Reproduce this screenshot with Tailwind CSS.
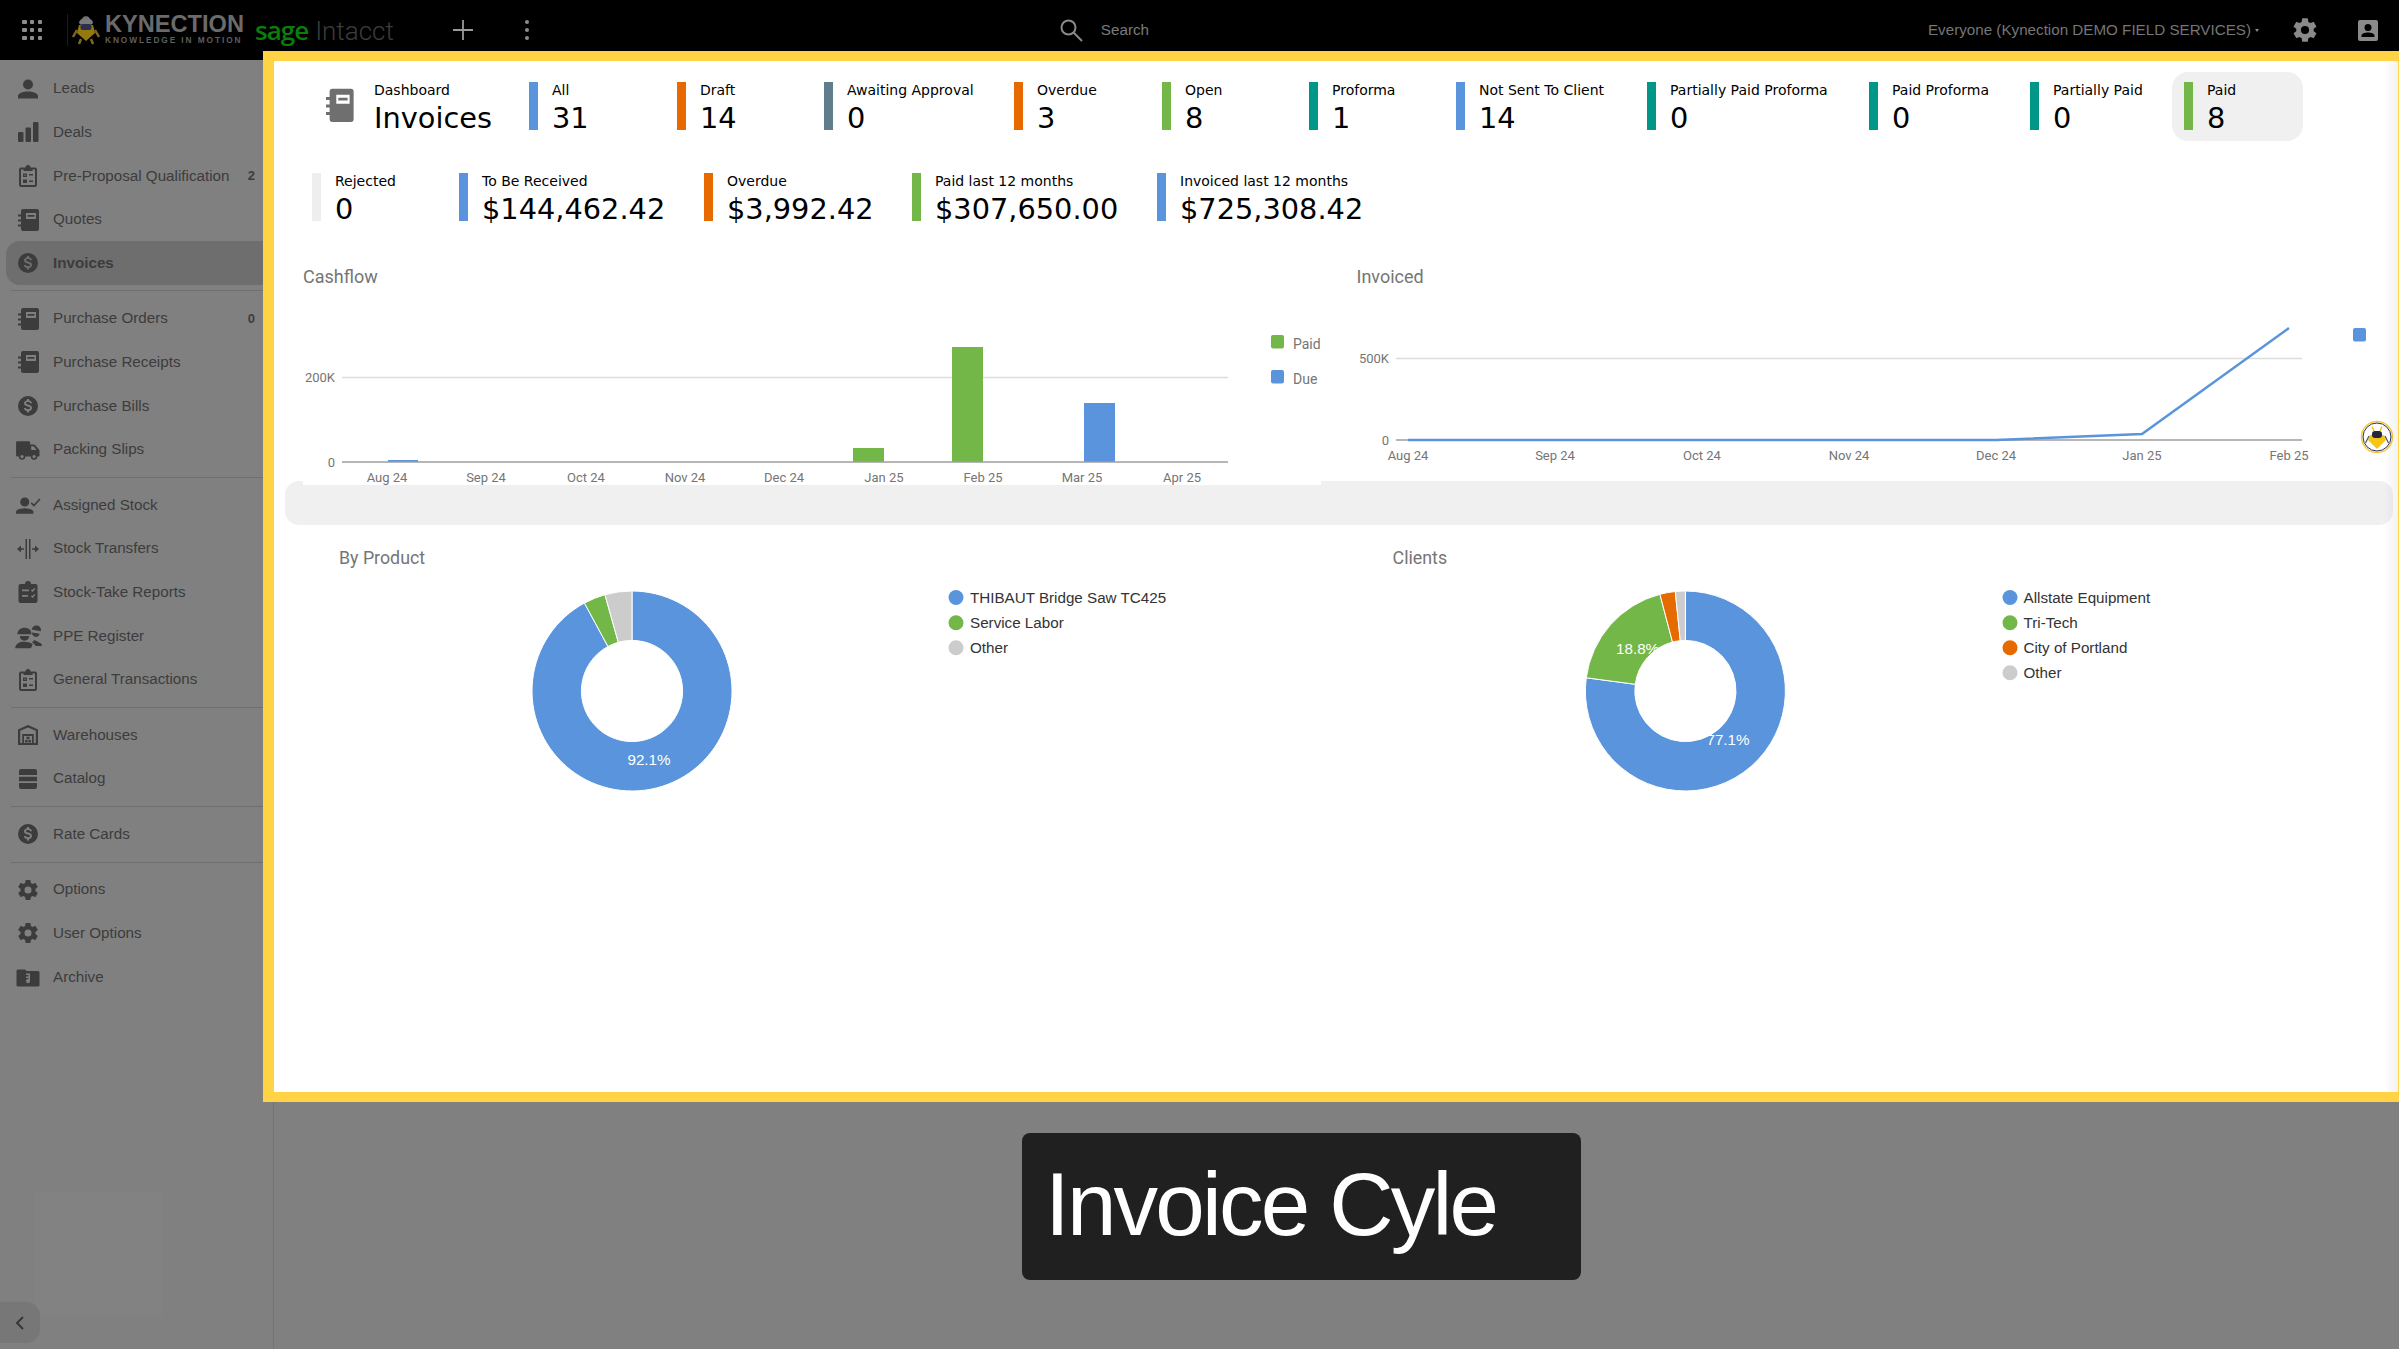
<!DOCTYPE html>
<html lang="en">

<head>
    <meta charset="UTF-8">
    <meta name="viewport" content="width=device-width, initial-scale=1.0">
    <script src="https://cdn.jsdelivr.net/npm/@tailwindcss/browser@4"></script>
    <title>Invoices</title>
</head>

<body class="m-0 bg-[#808080]">
    <svg class="hidden" xmlns="http://www.w3.org/2000/svg">
        <defs>
            <symbol id="i-person" viewBox="0 0 24 24"><path d="M12 2.500a5 5 0 1 1 0 10 5 5 0 0 1 0-10zM12 14.500c-5.300 0-10 2-10 4.500v2.500h20V19c0-2.500-4.700-4.500-10-4.500z"/></symbol>
            <symbol id="i-bars" viewBox="0 0 24 24"><rect x="2" y="12" width="5.500" height="10" rx="1"/><rect x="9.500" y="7.500" width="5.500" height="14.500" rx="1"/><rect x="17" y="2" width="5.500" height="20" rx="1"/></symbol>
            <symbol id="i-note" viewBox="0 0 24 24"><path fill-rule="evenodd" d="M7 1h14a2 2 0 0 1 2 2v18a2 2 0 0 1-2 2H7a2 2 0 0 1-2-2v-2.500H2v-2h3v-3H2v-2h3v-3H2v-2h3V3a2 2 0 0 1 2-2zM10 5v6h10V5H10zM11.500 7h7v1.800h-7V7z"/></symbol>
            <symbol id="i-clip" viewBox="0 0 24 24"><path fill-rule="evenodd" d="M5 3.500h4.500a2.500 2.500 0 0 1 5 0H19a2 2 0 0 1 2 2V21a2 2 0 0 1-2 2H5a2 2 0 0 1-2-2V5.500a2 2 0 0 1 2-2zM5 5.500V21h14V5.500h-2.500V7h-9V5.500H5zM7 9.500h4v3.500H7V9.500zM8.300 10.700v1.100h1.400v-1.100H8.300zM13 10h4v1.500h-4V10zM7 15.500h4V19H7v-3.500zM13 16.500h4V18h-4v-1.500z"/></symbol>
            <symbol id="i-dollar" viewBox="0 0 24 24"><path fill-rule="evenodd" d="M12 2a10 10 0 1 0 0 20 10 10 0 0 0 0-20zM13 17v1.500h-2V17c-1.700-.2-3-1.300-3-3h2c0 .8.900 1.200 2 1.200s2-.4 2-1.200-.9-1-2.200-1.400C10.100 12.200 8 11.600 8 9.300 8 7.900 9.200 6.700 11 6.300V5h2v1.300c1.700.4 3 1.600 3 3h-2c0-.8-.9-1.200-2-1.200s-2 .4-2 1.200c0 .7.900.9 2.200 1.300 1.700.5 3.800 1.100 3.800 3.400 0 1.600-1.300 2.700-3 3z"/></symbol>
            <symbol id="i-truck" viewBox="0 0 24 24"><path fill-rule="evenodd" d="M2 4h11a1 1 0 0 1 1 1v2h3.500c.5 0 .9.200 1.200.5l3.600 4.200c.2.300.300.600.300.900V17c0 .600-.4 1-1 1h-1a3 3 0 0 1-6 0H9.500a3 3 0 0 1-6 0H2a1 1 0 0 1-1-1V5a1 1 0 0 1 1-1zM6.500 16.500a1.500 1.500 0 1 0 0 3 1.500 1.500 0 0 0 0-3zM17.600 16.500a1.500 1.500 0 1 0 0 3 1.500 1.500 0 0 0 0-3zM15 8.500V12h5l-2.900-3.500H15z"/></symbol>
            <symbol id="i-pcheck" viewBox="0 0 24 24"><path d="M9 5a4.200 4.200 0 1 1 0 8.400A4.200 4.200 0 0 1 9 5zM9 15c-4.200 0-8 1.500-8 3.300V20h16v-1.700C17 16.500 13.200 15 9 15z"/><path d="M15 10l2.500 2.500L23 6.500" fill="none" stroke="currentColor" stroke-width="1.500"/></symbol>
            <symbol id="i-transfer" viewBox="0 0 24 24"><path d="M9.500 2H11v20H9.500zM13 2h1.500v20H13zM1 12l4-3.500v2.700h3v1.600H5v2.700zM23 12l-4-3.500v2.700h-3v1.600h3v2.700z"/></symbol>
            <symbol id="i-clipcheck" viewBox="0 0 24 24"><path fill-rule="evenodd" d="M4.500 4H9a3 3 0 0 1 6 0h4.500A2 2 0 0 1 21.500 6v15a2 2 0 0 1-2 2h-15a2 2 0 0 1-2-2V6a2 2 0 0 1 2-2zM6 9.500v1.800h7V9.500H6zM6 15v1.800h6V15H6zM15 10.500l1.500 1.500 2.800-3-1-.9-1.800 2-.6-.7-.9 1.100zM15 16.500l1.500 1.500 2.800-3-1-.9-1.800 2-.6-.7-.9 1.100z"/></symbol>
            <symbol id="i-ppe" viewBox="0 0 24 24"><path d="M3 10.500C3 7 5.500 5 9 5s6 2 6 5.500H3zM5 12h8c0 2.500-1.800 4-4 4s-4-1.500-4-4zM8.500 17c-3.800 0-7 1.500-7.500 5.500h13.500L16 19c-2-1.400-4.800-2-7.500-2z"/><path d="M15 6.500c.5-2.500 2.500-4 5-3.500 2.200.4 3.500 2.500 3 5l-8-1.500zM15.500 9l6.500 1c-.5 2-2.200 3-3.800 2.700-1.700-.3-3-2-2.700-3.700zM17.500 15.500l5 2.500c1 .5 1.500 1.500 1.500 2.500h-5.500l-1-1.500-2-1.500 2-2z"/></symbol>
            <symbol id="i-house" viewBox="0 0 24 24"><path fill-rule="evenodd" d="M12 2l10 4.500V22H2V6.500L12 2zM4.200 7.800V20h2V11h11.600v9h2V7.800L12 4.400 4.200 7.800zM8 13v7h8v-7H8zM10.500 13.800h3v2.400h-3v-2.400zM9 17h2.600v2.500H9V17zM12.400 17H15v2.500h-2.600V17z"/></symbol>
            <symbol id="i-stack" viewBox="0 0 24 24"><path d="M5 2h14a2 2 0 0 1 2 2v4H3V4a2 2 0 0 1 2-2zM3 9.800h18v4.400H3zM3 16h18v4a2 2 0 0 1-2 2H5a2 2 0 0 1-2-2v-4z"/></symbol>
            <symbol id="i-gear" viewBox="0 0 24 24"><path d="M12 15.500A3.500 3.500 0 0 1 8.500 12 3.500 3.500 0 0 1 12 8.500a3.500 3.500 0 0 1 3.500 3.500 3.500 3.500 0 0 1-3.500 3.500m7.430-2.530c.04-.32.07-.64.07-.97s-.03-.66-.07-1l2.110-1.630c.19-.15.24-.42.12-.64l-2-3.460c-.12-.22-.39-.31-.61-.22l-2.490 1c-.52-.39-1.060-.73-1.690-.98l-.37-2.650A.506.506 0 0 0 14 2h-4c-.25 0-.46.18-.5.42l-.37 2.650c-.63.25-1.170.59-1.690.98l-2.490-1c-.22-.09-.49 0-.61.22l-2 3.460c-.13.22-.07.49.12.64L4.570 11c-.04.34-.07.67-.07 1s.03.65.07.97l-2.110 1.660c-.19.15-.25.42-.12.64l2 3.460c.12.22.39.3.61.22l2.490-1.010c.52.4 1.060.74 1.690.99l.37 2.650c.04.24.25.42.5.42h4c.25 0 .46-.18.5-.42l.37-2.650c.63-.26 1.170-.59 1.690-.99l2.490 1.010c.22.08.49 0 .61-.22l2-3.460c.12-.22.07-.49-.12-.64l-2.110-1.660z"/></symbol>
            <symbol id="i-archive" viewBox="0 0 24 24"><path fill-rule="evenodd" d="M2 4.500h7l1.500 1.500H22a1.500 1.500 0 0 1 1.500 1.500V20a1.500 1.500 0 0 1-1.500 1.500H2A1.500 1.500 0 0 1 .500 20V6A1.500 1.500 0 0 1 2 4.500zM10 8.500V10h2.500v1.500H10v1.400h2.500v1.300a2 2 0 1 0 1.500 1.900V8.500h-4z"/></symbol>
        </defs>
    </svg>

    <div class="w-[2399px] h-[1349px] overflow-hidden flex flex-col font-['Liberation_Sans',sans-serif]">
        <!--Top bar-->
        <header class="h-[60px] shrink-0 bg-black flex items-center text-[#7a7a7a]">
            <div class="ml-[22px] grid grid-cols-3 gap-[3.500px] w-[20px]">
                <span class="size-[4.500px] bg-[#8c8c8c] rounded-[1px]"></span><span class="size-[4.500px] bg-[#8c8c8c] rounded-[1px]"></span><span class="size-[4.500px] bg-[#8c8c8c] rounded-[1px]"></span>
                <span class="size-[4.500px] bg-[#8c8c8c] rounded-[1px]"></span><span class="size-[4.500px] bg-[#8c8c8c] rounded-[1px]"></span><span class="size-[4.500px] bg-[#8c8c8c] rounded-[1px]"></span>
                <span class="size-[4.500px] bg-[#8c8c8c] rounded-[1px]"></span><span class="size-[4.500px] bg-[#8c8c8c] rounded-[1px]"></span><span class="size-[4.500px] bg-[#8c8c8c] rounded-[1px]"></span>
            </div>
            <div class="ml-[25px] w-px h-[32px] bg-[#1c1c1c]"></div>
            <svg class="ml-[4px]" width="28" height="30" viewBox="0 0 28 30">
                <path d="M7 8a7 5 0 0 1 14 0l-2 2H9z" fill="#7a7a7a"/>
                <circle cx="14" cy="5" r="3" fill="none" stroke="#7a7a7a" stroke-width="1.500"/>
                <path d="M7 10h14l2 8-9 8-9-8z" fill="#94790f"/>
                <rect x="8.500" y="9" width="11" height="6" rx="2" fill="#2b2f4a"/>
                <path d="M5 15L1 22M23 15l4 7M9 24l-2 5M19 24l2 5" stroke="#7a6a20" stroke-width="2.500" fill="none"/>
            </svg>
            <div class="ml-[5px] w-[139px] flex flex-col -mt-[2px]">
                <span class="text-[23.600px] leading-[20px] font-bold text-[#6b6b6b] whitespace-nowrap">KYNECTION</span>
                <span class="text-[8.300px] leading-[9px] mt-[2px] font-bold tracking-[1.920px] text-[#5f5f5f] whitespace-nowrap">KNOWLEDGE IN MOTION</span>
            </div>
            <span class="ml-[11px] mt-[1px] text-[26px] tracking-[-1px] font-['Open_Sans',sans-serif] font-semibold text-[#0b7d0b]">sage</span>
            <span class="ml-[7px] mt-[3px] text-[26px] font-['Roboto',sans-serif] font-light text-[#3c3c3c]">Intacct</span>
            <svg class="ml-[58px]" width="22" height="22" viewBox="0 0 22 22"><path d="M11 1v20M1 11h20" stroke="#9a9a9a" stroke-width="1.800"/></svg>
            <div class="ml-[51px] flex flex-col gap-[3.500px] w-[5px]">
                <span class="size-[4.500px] rounded-full bg-[#8c8c8c]"></span>
                <span class="size-[4.500px] rounded-full bg-[#8c8c8c]"></span>
                <span class="size-[4.500px] rounded-full bg-[#8c8c8c]"></span>
            </div>
            <svg class="ml-[529px]" width="24" height="24" viewBox="0 0 24 24" fill="none" stroke="#8a8a8a" stroke-width="2"><circle cx="9.500" cy="9.500" r="7"/><path d="M14.500 14.500L23 23"/></svg>
            <span class="ml-[18px] text-[15.200px] text-[#7a7a7a]">Search</span>
            <span class="ml-[779px] text-[15.200px] whitespace-nowrap text-[#757575]">Everyone (Kynection DEMO FIELD SERVICES)</span>
            <span class="ml-[4px] w-0 h-0 border-x-[2.500px] border-x-transparent border-t-[3px] border-t-[#8a8a8a]"></span>
            <svg class="ml-[32px] fill-[#8a8a8a]" width="28" height="28"><use href="#i-gear"/></svg>
            <svg class="ml-[39px]" width="20" height="21" viewBox="0 0 20 21"><path fill-rule="evenodd" fill="#8a8a8a" d="M2 0h16a2 2 0 0 1 2 2v17a2 2 0 0 1-2 2H2a2 2 0 0 1-2-2V2a2 2 0 0 1 2-2zM10 4a3.500 3.500 0 1 0 0 7 3.500 3.500 0 0 0 0-7zM3.500 17h13v-1.500c0-1.700-3.200-3-6.500-3s-6.500 1.300-6.500 3V17z"/></svg>
        </header>

        <div class="flex flex-1 min-h-0">
            <!--Sidebar-->
            <aside class="relative w-[274px] shrink-0 border-r border-[#747474] pt-[7px] text-[15.200px] text-[#3c3c3c]">
                <a class="ml-[6px] w-[258px] h-[43.600px] pl-[10px] flex items-center"><svg class="size-[24px] fill-[#3c3c3c]"><use href="#i-person"/></svg><span class="ml-[13px]">Leads</span></a>
                <a class="ml-[6px] w-[258px] h-[43.600px] pl-[10px] flex items-center"><svg class="size-[24px] fill-[#3c3c3c]"><use href="#i-bars"/></svg><span class="ml-[13px]">Deals</span></a>
                <a class="ml-[6px] w-[258px] h-[43.600px] pl-[10px] flex items-center"><svg class="size-[24px] fill-[#3c3c3c]"><use href="#i-clip"/></svg><span class="ml-[13px]">Pre-Proposal Qualification</span><span class="ml-auto pr-[9px] text-[13px] font-bold">2</span></a>
                <a class="ml-[6px] w-[258px] h-[43.600px] pl-[10px] flex items-center"><svg class="size-[24px] fill-[#3c3c3c]"><use href="#i-note"/></svg><span class="ml-[13px]">Quotes</span></a>
                <a class="ml-[6px] w-[258px] h-[43.600px] pl-[10px] flex items-center bg-[#6e6e6e] rounded-l-[14px] font-bold"><svg class="size-[24px] fill-[#3c3c3c]"><use href="#i-dollar"/></svg><span class="ml-[13px]">Invoices</span></a>
                <div class="ml-[11px] w-[253px] h-px bg-[#6f6f6f] my-[5.500px]"></div>
                <a class="ml-[6px] w-[258px] h-[43.600px] pl-[10px] flex items-center"><svg class="size-[24px] fill-[#3c3c3c]"><use href="#i-note"/></svg><span class="ml-[13px]">Purchase Orders</span><span class="ml-auto pr-[9px] text-[13px] font-bold">0</span></a>
                <a class="ml-[6px] w-[258px] h-[43.600px] pl-[10px] flex items-center"><svg class="size-[24px] fill-[#3c3c3c]"><use href="#i-note"/></svg><span class="ml-[13px]">Purchase Receipts</span></a>
                <a class="ml-[6px] w-[258px] h-[43.600px] pl-[10px] flex items-center"><svg class="size-[24px] fill-[#3c3c3c]"><use href="#i-dollar"/></svg><span class="ml-[13px]">Purchase Bills</span></a>
                <a class="ml-[6px] w-[258px] h-[43.600px] pl-[10px] flex items-center"><svg class="size-[26px] -mx-[1px] fill-[#3c3c3c]"><use href="#i-truck"/></svg><span class="ml-[13px]">Packing Slips</span></a>
                <div class="ml-[11px] w-[253px] h-px bg-[#6f6f6f] my-[5.500px]"></div>
                <a class="ml-[6px] w-[258px] h-[43.600px] pl-[10px] flex items-center"><svg class="size-[26px] -mx-[1px] fill-[#3c3c3c] text-[#3c3c3c]"><use href="#i-pcheck"/></svg><span class="ml-[13px]">Assigned Stock</span></a>
                <a class="ml-[6px] w-[258px] h-[43.600px] pl-[10px] flex items-center"><svg class="size-[24px] fill-[#3c3c3c]"><use href="#i-transfer"/></svg><span class="ml-[13px]">Stock Transfers</span></a>
                <a class="ml-[6px] w-[258px] h-[43.600px] pl-[10px] flex items-center"><svg class="size-[24px] fill-[#3c3c3c]"><use href="#i-clipcheck"/></svg><span class="ml-[13px]">Stock-Take Reports</span></a>
                <a class="ml-[6px] w-[258px] h-[43.600px] pl-[10px] flex items-center"><svg class="size-[28px] -mx-[2px] fill-[#3c3c3c]"><use href="#i-ppe"/></svg><span class="ml-[13px]">PPE Register</span></a>
                <a class="ml-[6px] w-[258px] h-[43.600px] pl-[10px] flex items-center"><svg class="size-[24px] fill-[#3c3c3c]"><use href="#i-clip"/></svg><span class="ml-[13px]">General Transactions</span></a>
                <div class="ml-[11px] w-[253px] h-px bg-[#6f6f6f] my-[5.500px]"></div>
                <a class="ml-[6px] w-[258px] h-[43.600px] pl-[10px] flex items-center"><svg class="size-[24px] fill-[#3c3c3c]"><use href="#i-house"/></svg><span class="ml-[13px]">Warehouses</span></a>
                <a class="ml-[6px] w-[258px] h-[43.600px] pl-[10px] flex items-center"><svg class="size-[24px] fill-[#3c3c3c]"><use href="#i-stack"/></svg><span class="ml-[13px]">Catalog</span></a>
                <div class="ml-[11px] w-[253px] h-px bg-[#6f6f6f] my-[5.500px]"></div>
                <a class="ml-[6px] w-[258px] h-[43.600px] pl-[10px] flex items-center"><svg class="size-[24px] fill-[#3c3c3c]"><use href="#i-dollar"/></svg><span class="ml-[13px]">Rate Cards</span></a>
                <div class="ml-[11px] w-[253px] h-px bg-[#6f6f6f] my-[5.500px]"></div>
                <a class="ml-[6px] w-[258px] h-[43.600px] pl-[10px] flex items-center"><svg class="size-[24px] fill-[#3c3c3c]"><use href="#i-gear"/></svg><span class="ml-[13px]">Options</span></a>
                <a class="ml-[6px] w-[258px] h-[43.600px] pl-[10px] flex items-center"><svg class="size-[24px] fill-[#3c3c3c]"><use href="#i-gear"/></svg><span class="ml-[13px]">User Options</span></a>
                <a class="ml-[6px] w-[258px] h-[43.600px] pl-[10px] flex items-center"><svg class="size-[24px] fill-[#3c3c3c]"><use href="#i-archive"/></svg><span class="ml-[13px]">Archive</span></a>

                <div class="absolute left-[35px] top-[1132px] w-[127px] h-[124px] bg-[#828282]"></div>
                <div class="absolute left-0 bottom-[6px] w-[40px] h-[41px] bg-[#777777] rounded-r-[14px] flex items-center pl-[15px]">
                    <svg width="10" height="14" viewBox="0 0 10 14" fill="none" stroke="#333" stroke-width="1.800"><path d="M8 1L2 7l6 6"/></svg>
                </div>
            </aside>

            <main class="-ml-[11px] -mt-[9px] relative z-10">
                <!--Highlighted area-->
                <section class="relative w-[2145px] h-[1051px] border-[10px] border-l-[11px] border-[#ffd343] bg-white font-['DejaVu_Sans',sans-serif] text-black">
                    <div class="absolute right-0 top-0 bottom-0 w-[14px] bg-gradient-to-r from-transparent to-black/5"></div>

                    <!--Top Section-->
                    <div class="pt-[11px] pl-[26px]">
                        <div class="flex h-[69px]">
                            <div class="w-[217px] pl-[26px] flex items-center">
                                <svg class="w-[32px] h-[38px] fill-[#6f6f6f]" viewBox="2 1 21 22" preserveAspectRatio="none"><use href="#i-note"/></svg>
                                <div class="ml-[16px] self-start pt-[10px]">
                                    <p class="text-[14px] leading-[16px]">Dashboard</p>
                                    <p class="text-[28.800px] leading-[40px]">Invoices</p>
                                </div>
                            </div>
                            <div class="w-[148px] pl-3 py-[10px] flex"><span class="w-[9px] h-[48px] bg-[#5a94dc]"></span><div class="ml-[14px]"><p class="text-[14px] leading-[16px] whitespace-nowrap">All</p><p class="text-[28.800px] leading-[40px]">31</p></div></div>
                            <div class="w-[147px] pl-3 py-[10px] flex"><span class="w-[9px] h-[48px] bg-[#e66a00]"></span><div class="ml-[14px]"><p class="text-[14px] leading-[16px] whitespace-nowrap">Draft</p><p class="text-[28.800px] leading-[40px]">14</p></div></div>
                            <div class="w-[190px] pl-3 py-[10px] flex"><span class="w-[9px] h-[48px] bg-[#607d8b]"></span><div class="ml-[14px]"><p class="text-[14px] leading-[16px] whitespace-nowrap">Awaiting Approval</p><p class="text-[28.800px] leading-[40px]">0</p></div></div>
                            <div class="w-[148px] pl-3 py-[10px] flex"><span class="w-[9px] h-[48px] bg-[#e66a00]"></span><div class="ml-[14px]"><p class="text-[14px] leading-[16px] whitespace-nowrap">Overdue</p><p class="text-[28.800px] leading-[40px]">3</p></div></div>
                            <div class="w-[147px] pl-3 py-[10px] flex"><span class="w-[9px] h-[48px] bg-[#74b749]"></span><div class="ml-[14px]"><p class="text-[14px] leading-[16px] whitespace-nowrap">Open</p><p class="text-[28.800px] leading-[40px]">8</p></div></div>
                            <div class="w-[147px] pl-3 py-[10px] flex"><span class="w-[9px] h-[48px] bg-[#009688]"></span><div class="ml-[14px]"><p class="text-[14px] leading-[16px] whitespace-nowrap">Proforma</p><p class="text-[28.800px] leading-[40px]">1</p></div></div>
                            <div class="w-[191px] pl-3 py-[10px] flex"><span class="w-[9px] h-[48px] bg-[#5a94dc]"></span><div class="ml-[14px]"><p class="text-[14px] leading-[16px] whitespace-nowrap">Not Sent To Client</p><p class="text-[28.800px] leading-[40px]">14</p></div></div>
                            <div class="w-[222px] pl-3 py-[10px] flex"><span class="w-[9px] h-[48px] bg-[#009688]"></span><div class="ml-[14px]"><p class="text-[14px] leading-[16px] whitespace-nowrap">Partially Paid Proforma</p><p class="text-[28.800px] leading-[40px]">0</p></div></div>
                            <div class="w-[161px] pl-3 py-[10px] flex"><span class="w-[9px] h-[48px] bg-[#009688]"></span><div class="ml-[14px]"><p class="text-[14px] leading-[16px] whitespace-nowrap">Paid Proforma</p><p class="text-[28.800px] leading-[40px]">0</p></div></div>
                            <div class="w-[154px] pl-3 py-[10px] flex"><span class="w-[9px] h-[48px] bg-[#009688]"></span><div class="ml-[14px]"><p class="text-[14px] leading-[16px] whitespace-nowrap">Partially Paid</p><p class="text-[28.800px] leading-[40px]">0</p></div></div>
                            <div class="w-[131px] pl-3 py-[10px] flex bg-[#f0f0f0] rounded-[16px]"><span class="w-[9px] h-[48px] bg-[#74b749]"></span><div class="ml-[14px]"><p class="text-[14px] leading-[16px] whitespace-nowrap">Paid</p><p class="text-[28.800px] leading-[40px]">8</p></div></div>
                        </div>
                        <div class="flex h-[69px] mt-[22px]">
                            <div class="w-[147px] pl-3 py-[10px] flex"><span class="w-[9px] h-[48px] bg-[#eeeeee]"></span><div class="ml-[14px]"><p class="text-[14px] leading-[16px] whitespace-nowrap">Rejected</p><p class="text-[28.800px] leading-[40px]">0</p></div></div>
                            <div class="w-[245px] pl-3 py-[10px] flex"><span class="w-[9px] h-[48px] bg-[#5a94dc]"></span><div class="ml-[14px]"><p class="text-[14px] leading-[16px] whitespace-nowrap">To Be Received</p><p class="text-[28.800px] leading-[40px]">$144,462.42</p></div></div>
                            <div class="w-[208px] pl-3 py-[10px] flex"><span class="w-[9px] h-[48px] bg-[#e66a00]"></span><div class="ml-[14px]"><p class="text-[14px] leading-[16px] whitespace-nowrap">Overdue</p><p class="text-[28.800px] leading-[40px]">$3,992.42</p></div></div>
                            <div class="w-[245px] pl-3 py-[10px] flex"><span class="w-[9px] h-[48px] bg-[#74b749]"></span><div class="ml-[14px]"><p class="text-[14px] leading-[16px] whitespace-nowrap">Paid last 12 months</p><p class="text-[28.800px] leading-[40px]">$307,650.00</p></div></div>
                            <div class="w-[245px] pl-3 py-[10px] flex"><span class="w-[9px] h-[48px] bg-[#5a94dc]"></span><div class="ml-[14px]"><p class="text-[14px] leading-[16px] whitespace-nowrap">Invoiced last 12 months</p><p class="text-[28.800px] leading-[40px]">$725,308.42</p></div></div>
                        </div>
                    </div>

                    <!--Cashflow and Invoiced-->
                    <div class="mt-[18px] flex items-start font-['Roboto',sans-serif]">
                        <div class="relative z-10 ml-[29px] bg-white">
                            <svg class="block" width="1018" height="235" viewBox="303 250 1018 235" fill="#757575" font-size="13" text-anchor="middle">
                                <text x="303" y="283" font-size="18" text-anchor="start">Cashflow</text>
                                <path d="M342 377.500H1228" stroke="#dcdcdc" stroke-width="1.500"/>
                                <rect x="388" y="460" width="30" height="2" fill="#5a94dc"/>
                                <rect x="853" y="448" width="31" height="14" fill="#74b749"/>
                                <rect x="952" y="347" width="31" height="115" fill="#74b749"/>
                                <rect x="1084" y="403" width="31" height="59" fill="#5a94dc"/>
                                <path d="M342 462H1228" stroke="#9e9e9e" stroke-width="1.500"/>
                                <text x="335" y="382" text-anchor="end">200K</text>
                                <text x="335" y="467" text-anchor="end">0</text>
                                <text x="387" y="481.500">Aug 24</text>
                                <text x="486" y="481.500">Sep 24</text>
                                <text x="586" y="481.500">Oct 24</text>
                                <text x="685" y="481.500">Nov 24</text>
                                <text x="784" y="481.500">Dec 24</text>
                                <text x="884" y="481.500">Jan 25</text>
                                <text x="983" y="481.500">Feb 25</text>
                                <text x="1082" y="481.500">Mar 25</text>
                                <text x="1182" y="481.500">Apr 25</text>
                                <rect x="1271" y="335" width="13" height="13.500" rx="2" fill="#74b749"/>
                                <rect x="1271" y="370" width="13" height="13.500" rx="2" fill="#5a94dc"/>
                                <text x="1293" y="349" font-size="14" text-anchor="start">Paid</text>
                                <text x="1293" y="384" font-size="14" text-anchor="start">Due</text>
                            </svg>
                        </div>
                        <svg class="block" width="1077" height="231" viewBox="1321 250 1077 231" fill="#757575" font-size="13" text-anchor="middle">
                            <text x="1356.500" y="283" font-size="18" text-anchor="start">Invoiced</text>
                            <path d="M1396 358.500H2302" stroke="#dcdcdc" stroke-width="1.500"/>
                            <path d="M1396 440H2302" stroke="#9e9e9e" stroke-width="1.500"/>
                            <path d="M1408 440H1996L2142 434L2289 328" fill="none" stroke="#5a94dc" stroke-width="2.500"/>
                            <text x="1389" y="363" text-anchor="end">500K</text>
                            <text x="1389" y="445" text-anchor="end">0</text>
                            <text x="1408" y="459.500">Aug 24</text>
                            <text x="1555" y="459.500">Sep 24</text>
                            <text x="1702" y="459.500">Oct 24</text>
                            <text x="1849" y="459.500">Nov 24</text>
                            <text x="1996" y="459.500">Dec 24</text>
                            <text x="2142" y="459.500">Jan 25</text>
                            <text x="2289" y="459.500">Feb 25</text>
                            <rect x="2353" y="328" width="13" height="13.500" rx="2" fill="#5a94dc"/>
                            <circle cx="2377" cy="437" r="15.500" fill="#fff" stroke="#f7c93a" stroke-width="1.500"/>
                            <circle cx="2377" cy="437" r="14" fill="none" stroke="#2b2f6b" stroke-width="1"/>
                            <path d="M2370 435h14l2 5-9 9-9-9z" fill="#f5c518"/>
                            <rect x="2372" y="431" width="10" height="7" rx="3" fill="#26263a"/>
                            <path d="M2374 431l-2-4.500M2380 431l2-4.500" stroke="#f5c518" stroke-width="1.500" fill="none"/>
                            <path d="M2369 436l-3.500 7M2385 436l3.500 7" stroke="#555" stroke-width="1.200" fill="none"/>
                        </svg>
                    </div>
                    <div class="-mt-[4px] ml-[11px] mr-[5px] h-[44px] bg-[#f0f0f0] rounded-[14px]"></div>

                    <!--By Product and Clients-->
                    <div class="flex font-['Liberation_Sans',sans-serif]">
                        <svg class="block" width="1062" height="300" viewBox="274 525 1062 300" font-size="15.200" fill="#333">
                            <text x="339" y="563.500" font-size="17.800" fill="#757575" font-family="Roboto">By Product</text>
                            <g stroke="#fff" stroke-width="1">
                                <path fill="#5a94dc" d="M632 591A100 100 0 1 1 584.440 603.040L607.930 646.490A50.600 50.600 0 1 0 632 640.400Z"/>
                                <path fill="#74b749" d="M584.440 603.040A100 100 0 0 1 604.940 594.730L618.310 642.290A50.600 50.600 0 0 0 607.930 646.490Z"/>
                                <path fill="#cccccc" d="M604.940 594.730A100 100 0 0 1 632 591L632 640.400A50.600 50.600 0 0 0 618.310 642.290Z"/>
                            </g>
                            <text x="649" y="765" fill="#fff" text-anchor="middle">92.1%</text>
                            <circle cx="956" cy="597.500" r="7.500" fill="#5a94dc"/>
                            <circle cx="956" cy="622.700" r="7.500" fill="#74b749"/>
                            <circle cx="956" cy="647.700" r="7.500" fill="#cccccc"/>
                            <text x="970" y="602.500">THIBAUT Bridge Saw TC425</text>
                            <text x="970" y="628">Service Labor</text>
                            <text x="970" y="653">Other</text>
                        </svg>
                        <svg class="block" width="1062" height="300" viewBox="1336 525 1062 300" font-size="15.200" fill="#333">
                            <text x="1392.600" y="563.500" font-size="17.800" fill="#757575" font-family="Roboto">Clients</text>
                            <g stroke="#fff" stroke-width="1">
                                <path fill="#5a94dc" d="M1685.400 591A100 100 0 1 1 1586.280 677.770L1635.250 684.310A50.600 50.600 0 1 0 1685.400 640.400Z"/>
                                <path fill="#74b749" d="M1586.280 677.770A100 100 0 0 1 1659.920 594.300L1672.510 642.070A50.600 50.600 0 0 0 1635.250 684.310Z"/>
                                <path fill="#e66a00" d="M1659.920 594.300A100 100 0 0 1 1675.290 591.510L1680.280 640.660A50.600 50.600 0 0 0 1672.510 642.070Z"/>
                                <path fill="#cccccc" d="M1675.290 591.510A100 100 0 0 1 1685.400 591L1685.400 640.400A50.600 50.600 0 0 0 1680.280 640.660Z"/>
                            </g>
                            <text x="1637.600" y="654" fill="#fff" text-anchor="middle">18.8%</text>
                            <text x="1728" y="745" fill="#fff" text-anchor="middle">77.1%</text>
                            <circle cx="2010" cy="597.500" r="7.500" fill="#5a94dc"/>
                            <circle cx="2010" cy="622.700" r="7.500" fill="#74b749"/>
                            <circle cx="2010" cy="647.700" r="7.500" fill="#e66a00"/>
                            <circle cx="2010" cy="672.700" r="7.500" fill="#cccccc"/>
                            <text x="2023.500" y="602.500">Allstate Equipment</text>
                            <text x="2023.500" y="628">Tri-Tech</text>
                            <text x="2023.500" y="653">City of Portland</text>
                            <text x="2023.500" y="678">Other</text>
                        </svg>
                    </div>
                </section>

                <!--Caption-->
                <div class="ml-[759px] mt-[31px] w-[559px] h-[147px] bg-[#202020] rounded-[8px] flex items-center pl-[23px] pb-[4px]">
                    <span class="text-white text-[89px] tracking-[-2.800px] leading-none">Invoice Cyle</span>
                </div>
            </main>
        </div>
    </div>
</body>

</html>
